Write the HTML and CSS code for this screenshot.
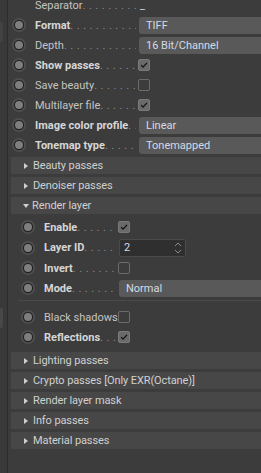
FILE: index.html
```html
<!DOCTYPE html>
<html>
<head>
<meta charset="utf-8">
<link rel="stylesheet" href="styles.css">
</head>
<body>
<div class="app">
  <div class="gutter">
    <div class="gblock g1"></div>
    <div class="gblock g2"></div>
  </div>
  <div class="main">
    <div class="row">
      <span class="radio blank"></span>
      <span class="lab"><span class="txt">Separator</span><span class="dots">. . . . . . . . . . . . . . . . . . . .</span></span>
      <span class="plain">_</span>
    </div>
    <div class="row">
      <svg class="radio" viewBox="0 0 14 14"><circle cx="7" cy="7" r="7" fill="#4f4f4f"/><circle cx="7" cy="7" r="4.6" fill="#7e7e7e" stroke="#232323" stroke-width="1.2"/></svg>
      <span class="lab"><span class="txt b">Format</span><span class="dots">. . . . . . . . . . . . . . . . . . . .</span></span>
      <span class="drop">TIFF</span>
    </div>
    <div class="row">
      <svg class="radio" viewBox="0 0 14 14"><circle cx="7" cy="7" r="7" fill="#4f4f4f"/><circle cx="7" cy="7" r="4.6" fill="#7e7e7e" stroke="#232323" stroke-width="1.2"/></svg>
      <span class="lab"><span class="txt">Depth</span><span class="dots">. . . . . . . . . . . . . . . . . . . .</span></span>
      <span class="drop">16 Bit/Channel</span>
    </div>
    <div class="row">
      <svg class="radio" viewBox="0 0 14 14"><circle cx="7" cy="7" r="7" fill="#4f4f4f"/><circle cx="7" cy="7" r="4.6" fill="#7e7e7e" stroke="#232323" stroke-width="1.2"/></svg>
      <span class="lab"><span class="txt b">Show passes</span><span class="dots">. . . . . . . . . . . . . . . . . . . .</span></span>
      <span class="cb on"><svg viewBox="0 0 12 12"><path d="M2.5 6.2 L4.8 8.6 L9.6 3.4" fill="none" stroke="#111" stroke-width="1.5"/></svg></span>
    </div>
    <div class="row">
      <svg class="radio" viewBox="0 0 14 14"><circle cx="7" cy="7" r="7" fill="#4f4f4f"/><circle cx="7" cy="7" r="4.6" fill="#7e7e7e" stroke="#232323" stroke-width="1.2"/></svg>
      <span class="lab"><span class="txt">Save beauty</span><span class="dots">. . . . . . . . . . . . . . . . . . . .</span></span>
      <span class="cb"></span>
    </div>
    <div class="row">
      <svg class="radio" viewBox="0 0 14 14"><circle cx="7" cy="7" r="7" fill="#4f4f4f"/><circle cx="7" cy="7" r="4.6" fill="#7e7e7e" stroke="#232323" stroke-width="1.2"/></svg>
      <span class="lab"><span class="txt">Multilayer file</span><span class="dots">. . . . . . . . . . . . . . . . . . . .</span></span>
      <span class="cb on"><svg viewBox="0 0 12 12"><path d="M2.5 6.2 L4.8 8.6 L9.6 3.4" fill="none" stroke="#111" stroke-width="1.5"/></svg></span>
    </div>
    <div class="row">
      <svg class="radio" viewBox="0 0 14 14"><circle cx="7" cy="7" r="7" fill="#4f4f4f"/><circle cx="7" cy="7" r="4.6" fill="#7e7e7e" stroke="#232323" stroke-width="1.2"/></svg>
      <span class="lab"><span class="txt b">Image color profile</span><span class="dots">. . . . . . . . . . . . . . . . . . . .</span></span>
      <span class="drop">Linear</span>
    </div>
    <div class="row">
      <svg class="radio" viewBox="0 0 14 14"><circle cx="7" cy="7" r="7" fill="#4f4f4f"/><circle cx="7" cy="7" r="4.6" fill="#7e7e7e" stroke="#232323" stroke-width="1.2"/></svg>
      <span class="lab"><span class="txt b">Tonemap type</span><span class="dots">. . . . . . . . . . . . . . . . . . . .</span></span>
      <span class="drop">Tonemapped</span>
    </div>

    <div class="head first"><span class="tri-r"></span>Beauty passes</div>
    <div class="head"><span class="tri-r"></span>Denoiser passes</div>
    <div class="head"><span class="tri-d"></span>Render layer</div>

    <div class="sub">
      <div class="row srow">
        <svg class="radio" viewBox="0 0 14 14"><circle cx="7" cy="7" r="7" fill="#4f4f4f"/><circle cx="7" cy="7" r="4.6" fill="#7e7e7e" stroke="#232323" stroke-width="1.2"/></svg>
        <span class="lab"><span class="txt b">Enable</span><span class="dots">. . . . . . . . . . . . . . . . . . . .</span></span>
        <span class="cb on"><svg viewBox="0 0 12 12"><path d="M2.5 6.2 L4.8 8.6 L9.6 3.4" fill="none" stroke="#111" stroke-width="1.5"/></svg></span>
      </div>
      <div class="row srow tall">
        <svg class="radio" viewBox="0 0 14 14"><circle cx="7" cy="7" r="7" fill="#4f4f4f"/><circle cx="7" cy="7" r="4.6" fill="#7e7e7e" stroke="#232323" stroke-width="1.2"/></svg>
        <span class="lab"><span class="txt b">Layer ID</span><span class="dots">. . . . . . . . . . . . . . . . . . . .</span></span>
        <span class="num"><span class="numval">2</span><svg class="spin" viewBox="0 0 8 14"><path d="M1 5 L4 2 L7 5 M1 9 L4 12 L7 9" fill="none" stroke="#8c8c8c" stroke-width="1"/></svg></span>
      </div>
      <div class="row srow">
        <svg class="radio" viewBox="0 0 14 14"><circle cx="7" cy="7" r="7" fill="#4f4f4f"/><circle cx="7" cy="7" r="4.6" fill="#7e7e7e" stroke="#232323" stroke-width="1.2"/></svg>
        <span class="lab"><span class="txt b">Invert</span><span class="dots">. . . . . . . . . . . . . . . . . . . .</span></span>
        <span class="cb"></span>
      </div>
      <div class="row srow">
        <svg class="radio" viewBox="0 0 14 14"><circle cx="7" cy="7" r="7" fill="#4f4f4f"/><circle cx="7" cy="7" r="4.6" fill="#7e7e7e" stroke="#232323" stroke-width="1.2"/></svg>
        <span class="lab"><span class="txt b">Mode</span><span class="dots">. . . . . . . . . . . . . . . . . . . .</span></span>
        <span class="drop">Normal</span>
      </div>
      <div class="sep"></div>
      <div class="row srow">
        <svg class="radio" viewBox="0 0 14 14"><circle cx="7" cy="7" r="7" fill="#4f4f4f"/><circle cx="7" cy="7" r="4.6" fill="#7e7e7e" stroke="#232323" stroke-width="1.2"/></svg>
        <span class="lab"><span class="txt">Black shadows</span><span class="dots">. . . . . . . . . . . . . . . . . . . .</span></span>
        <span class="cb"></span>
      </div>
      <div class="row srow">
        <svg class="radio" viewBox="0 0 14 14"><circle cx="7" cy="7" r="7" fill="#4f4f4f"/><circle cx="7" cy="7" r="4.6" fill="#7e7e7e" stroke="#232323" stroke-width="1.2"/></svg>
        <span class="lab"><span class="txt b">Reflections</span><span class="dots">. . . . . . . . . . . . . . . . . . . .</span></span>
        <span class="cb on"><svg viewBox="0 0 12 12"><path d="M2.5 6.2 L4.8 8.6 L9.6 3.4" fill="none" stroke="#111" stroke-width="1.5"/></svg></span>
      </div>
    </div>

    <div class="head after"><span class="tri-r"></span>Lighting passes</div>
    <div class="head"><span class="tri-r"></span>Crypto passes [Only EXR(Octane)]</div>
    <div class="head"><span class="tri-r"></span>Render layer mask</div>
    <div class="head"><span class="tri-r"></span>Info passes</div>
    <div class="head"><span class="tri-r"></span>Material passes</div>
  </div>
</div>
</body>
</html>
```
FILE: styles.css
```css
html, body {
  margin: 0;
  padding: 0;
  background: #3c3c3c;
  height: 100%;
  overflow: hidden;
}
body {
  font-family: Roboto, "Open Sans", sans-serif;
  font-size: 11px;
  color: #c8c8c8;
}
.app {
  display: flex;
  height: 473px;
}
.gutter {
  width: 7px;
  background: #393939;
  border-right: 1px solid #2c2c2c;
  display: flex;
  flex-direction: column;
}
.gblock {
  width: 3px;
  height: 20px;
  background: #424242;
  border-radius: 0 2px 2px 0;
}
.g1 { margin-top: 22px; }
.g2 { margin-top: 266px; background: #484848; }
.main {
  flex: 1;
  margin-top: -5px;
  display: flex;
  flex-direction: column;
  min-width: 0;
}
.row {
  display: flex;
  align-items: center;
  height: 20px;
  flex: none;
}
.radio {
  width: 14px;
  height: 14px;
  margin-left: 4px;
  flex: none;
}
.radio.blank { display: inline-block; }
.lab {
  display: flex;
  align-items: baseline;
  width: 104px;
  margin-left: 9px;
  padding-right: 3px;
  box-sizing: border-box;
  overflow: hidden;
  white-space: nowrap;
  flex: none;
}
.txt { flex: none; color: #c4c4c4; }
.txt.b { font-weight: 700; color: #d6d6d6; }
.dots {
  flex: 1;
  overflow: hidden;
  color: #8c8c8c;
  white-space: nowrap;
  min-width: 0;
  letter-spacing: 0.4px;
}
.plain { color: #d0d0d0; padding-left: 1px; }
.drop {
  flex: 1;
  height: 17px;
  line-height: 17px;
  background: #595959;
  border-radius: 3px 0 0 3px;
  padding-left: 7px;
  color: #d3dbe6;
  box-sizing: border-box;
}
.cb {
  width: 12px;
  height: 12px;
  box-sizing: border-box;
  border: 1px solid #6c6c6c;
  border-radius: 2px;
  margin-left: -1px;
  display: flex;
}
.cb.on {
  background: #6a6a6a;
  border-color: #7a7a7a;
}
.cb svg { width: 10px; height: 10px; }
.head {
  height: 17px;
  margin-top: 3px;
  margin-left: 3px;
  background: #474747;
  display: flex;
  align-items: center;
  color: #d0d0d0;
  flex: none;
  letter-spacing: -0.1px;
}
.head.first { margin-top: 2px; }
.head.after { margin-top: 5px; }
.tri-r {
  width: 0;
  height: 0;
  border-top: 3.5px solid transparent;
  border-bottom: 3.5px solid transparent;
  border-left: 4px solid #cfcfcf;
  margin-left: 13px;
  margin-right: 5px;
}
.tri-d {
  width: 0;
  height: 0;
  border-left: 3.5px solid transparent;
  border-right: 3.5px solid transparent;
  border-top: 4px solid #cfcfcf;
  margin-left: 12px;
  margin-right: 3px;
}
.sub {
  padding-top: 3px;
  display: flex;
  flex-direction: column;
}
.srow .radio { margin-left: 13px; }
.srow .lab { width: 75px; margin-left: 9px; }
.srow.tall { height: 21px; }
.num {
  width: 67px;
  height: 18px;
  box-sizing: border-box;
  background: #2f2f2f;
  border: 1px solid #4a4a4a;
  border-radius: 2px;
  display: flex;
  align-items: center;
  justify-content: space-between;
  padding-left: 4px;
  padding-right: 3px;
  color: #d3dbe6;
}
.spin { width: 8px; height: 14px; }
.sep {
  height: 1px;
  background: #4a4a4a;
  margin-left: 10px;
  margin-top: 2px;
  margin-bottom: 6px;
  flex: none;
}
```
